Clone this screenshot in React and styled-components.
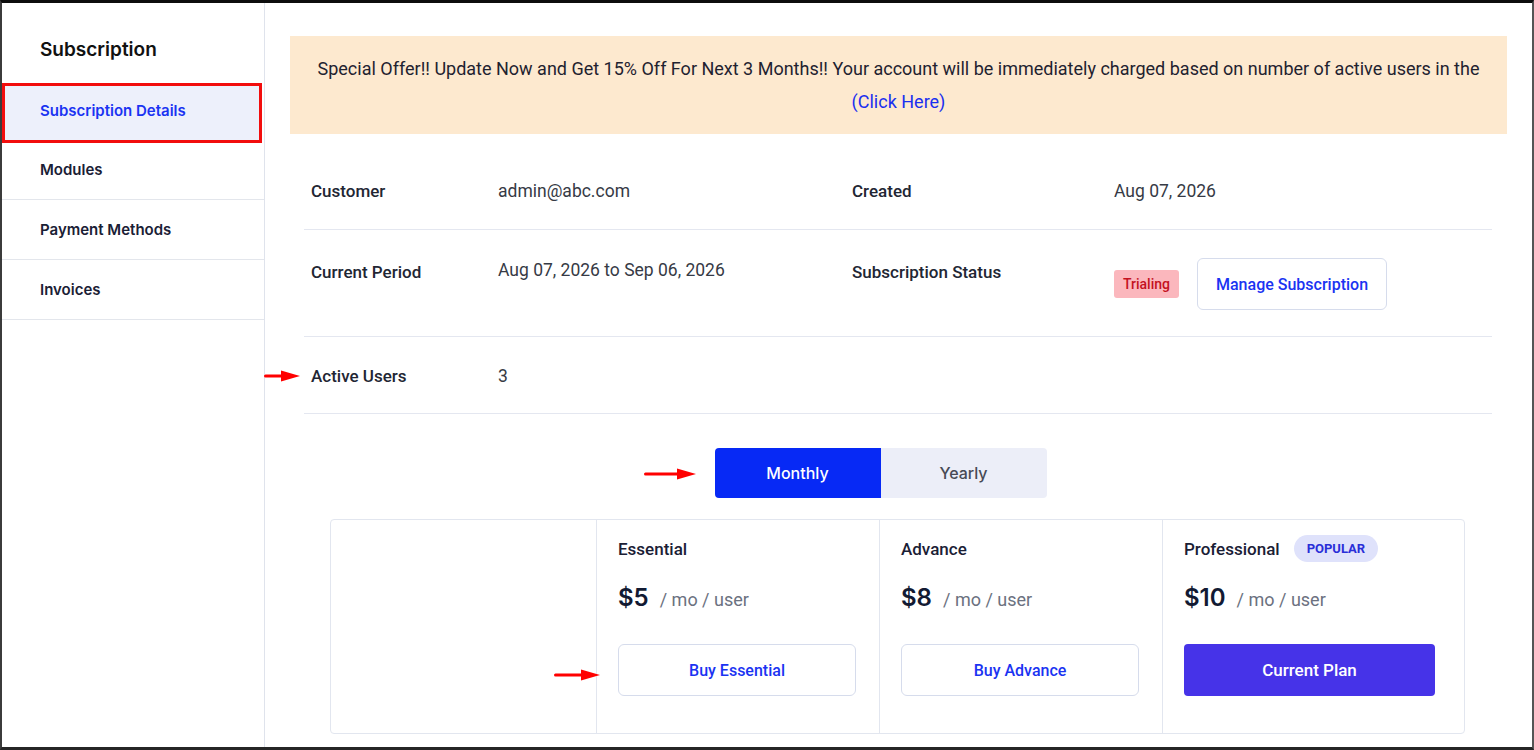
import React, { useState } from "react";
import styled, { createGlobalStyle } from "styled-components";

const GlobalStyle = createGlobalStyle`
  * { box-sizing: border-box; }
  html, body { margin: 0; padding: 0; background: #fff; }
  body { font-family: Roboto, "Liberation Sans", Arial, sans-serif; }
`;

const Frame = styled.div`
  width: 1534px;
  height: 750px;
  display: flex;
  border-top: 3px solid #0d0d0d;
  border-left: 2px solid #3b3b3b;
  border-right: 2px solid #555;
  border-bottom: 3px solid #262626;
  background: #fff;
  overflow: hidden;
`;

const Sidebar = styled.aside`
  width: 263px;
  flex-shrink: 0;
  border-right: 1px solid #dfe3ec;
  padding-top: 35px;
  font-family: Inter, Roboto, sans-serif;
`;

const SideTitle = styled.div`
  font-size: 19px;
  font-weight: 600;
  color: #111;
  line-height: 24px;
  padding-left: 38px;
  margin-bottom: 21px;
`;

const SideItem = styled.div`
  height: 60px;
  display: flex;
  align-items: center;
  padding-left: 38px;
  font-size: 15px;
  font-weight: 600;
  color: #1a2035;
  border-bottom: 1px solid #e3e6ec;
`;

// the selected entry carries a red frame that sits over the next row's top edge
const ActiveItem = styled(SideItem)`
  position: relative;
  z-index: 1;
  padding-left: 35px;
  padding-bottom: 5px;
  margin: 0 2px -3px 0;
  color: #1a33f2;
  background: #edf0fb;
  border: 3px solid #f20d0d;
`;

const Main = styled.main`
  flex: 1;
  padding: 33px 25px 0 25px;
  display: flex;
  flex-direction: column;
`;

const Banner = styled.div`
  background: #fde9cf;
  padding: 16px 20px;
  text-align: center;
  font-size: 18px;
  line-height: 33px;
  color: #1f2230;
`;

const BannerLink = styled.a`
  display: block;
  color: #1a2ff0;
  text-decoration: none;
`;

const InfoTable = styled.div`
  margin: 15px 15px 0 14px;
`;

const InfoRow = styled.div`
  display: grid;
  grid-template-columns: 187px 354px 262px 1fr;
  padding: ${(p) => p.$pad || "28px 7px 26px"};
  border-bottom: 1px solid #e4e7f0;
  align-items: start;
  position: relative;
`;

const Label = styled.div`
  font-size: 17px;
  font-weight: 500;
  color: #222633;
  line-height: 24px;
  margin-top: ${(p) => p.$offset || "0"};
`;

const Value = styled.div`
  font-size: 17.5px;
  color: #363a45;
  line-height: 24px;
  display: flex;
  align-items: center;
  gap: 18px;
`;

const Badge = styled.span`
  background: #fbb7bd;
  color: #c4121f;
  font-size: 14px;
  font-weight: 500;
  height: 28px;
  padding: 0 9px;
  border-radius: 3px;
  display: inline-flex;
  align-items: center;
`;

const OutlineButton = styled.button`
  height: 52px;
  padding: 0 18px;
  background: #fff;
  border: 1px solid #d6dcec;
  border-radius: 6px;
  color: #1a33f2;
  font-family: Roboto, sans-serif;
  font-size: 16px;
  font-weight: 500;
  cursor: pointer;
`;

const ToggleWrap = styled.div`
  display: flex;
  justify-content: center;
  margin-top: 34px;
  padding-right: 36px;
`;

const Toggle = styled.div`
  display: flex;
  position: relative;
`;

const ToggleOption = styled.button`
  width: 166px;
  height: 50px;
  border: none;
  font-family: Inter, Roboto, sans-serif;
  font-size: 16px;
  font-weight: 500;
  cursor: pointer;
  background: ${(p) => (p.$active ? "#0729f5" : "#eceef8")};
  color: ${(p) => (p.$active ? "#fff" : "#474a55")};
  border-radius: ${(p) => (p.$first ? "4px 0 0 4px" : "0 4px 4px 0")};
`;

const PlanGrid = styled.div`
  margin: 21px 42px 0 40px;
  display: grid;
  grid-template-columns: 265px 283px 283px 1fr;
  border: 1px solid #e2e6ef;
  border-radius: 4px;
  height: 215px;
`;

const PlanCell = styled.div`
  position: relative;
  padding: 15px 23px 0 21px;
  border-left: ${(p) => (p.$first ? "none" : "1px solid #e2e6ef")};
  padding-right: ${(p) => (p.$wide ? "29px" : "23px")};
`;

const PlanHead = styled.div`
  display: flex;
  align-items: center;
  gap: 14px;
  height: 27px;
`;

const PlanName = styled.div`
  font-size: 17px;
  font-weight: 500;
  color: #1a2035;
`;

const Popular = styled.span`
  background: #dfe2fb;
  color: #2a2fd8;
  font-size: 13px;
  font-weight: 700;
  height: 27px;
  padding: 0 13px;
  border-radius: 14px;
  display: inline-flex;
  align-items: center;
`;

const PriceRow = styled.div`
  display: flex;
  align-items: baseline;
  gap: 11px;
  margin-top: 21px;
  height: 32px;
`;

const Price = styled.span`
  font-family: Inter, Roboto, sans-serif;
  font-size: 24px;
  font-weight: 600;
  color: #121a33;
`;

const Per = styled.span`
  font-size: 18px;
  color: #6b7180;
`;

const PlanButton = styled(OutlineButton)`
  width: 100%;
  margin-top: 29px;
`;

const CurrentButton = styled.button`
  width: 100%;
  height: 52px;
  margin-top: 29px;
  border: none;
  border-radius: 4px;
  background: #4633e8;
  color: #fff;
  font-family: Roboto, sans-serif;
  font-size: 17px;
  font-weight: 500;
`;

// red pointer arrows laid over the page
const Pointer = styled.svg`
  position: absolute;
  top: ${(p) => p.$top};
  left: ${(p) => p.$left};
  pointer-events: none;
`;

function Arrow({ width, top, left }) {
  return (
    <Pointer $top={top} $left={left} width={width} height="14" viewBox={`0 0 ${width} 14`}>
      <line x1="1.5" y1="7" x2={width - 14} y2="7" stroke="#f00" strokeWidth="3" strokeLinecap="round" />
      <polygon points={`${width - 19},1.5 ${width},7 ${width - 19},12.5`} fill="#f00" />
    </Pointer>
  );
}

const plans = [
  { name: "Essential", price: "$5" },
  { name: "Advance", price: "$8" },
  { name: "Professional", price: "$10", popular: true, current: true },
];

export default function App() {
  const [period, setPeriod] = useState("monthly");

  return (
    <>
      <GlobalStyle />
      <Frame>
        <Sidebar>
          <SideTitle>Subscription</SideTitle>
          <ActiveItem>Subscription Details</ActiveItem>
          <SideItem>Modules</SideItem>
          <SideItem>Payment Methods</SideItem>
          <SideItem>Invoices</SideItem>
        </Sidebar>

        <Main>
          <Banner>
            Special Offer!! Update Now and Get 15% Off For Next 3 Months!! Your account will be
            immediately charged based on number of active users in the
            <BannerLink href="#">(Click Here)</BannerLink>
          </Banner>

          <InfoTable>
            <InfoRow $pad="30px 7px 26px">
              <Label>Customer</Label>
              <Value>admin@abc.com</Value>
              <Label>Created</Label>
              <Value>Aug 07, 2026</Value>
            </InfoRow>
            <InfoRow>
              <Label $offset="2px">Current Period</Label>
              <Value>Aug 07, 2026 to Sep 06, 2026</Value>
              <Label $offset="2px">Subscription Status</Label>
              <Value>
                <Badge>Trialing</Badge>
                <OutlineButton>Manage Subscription</OutlineButton>
              </Value>
            </InfoRow>
            <InfoRow $pad="27px 7px 25px">
              <Arrow width={36} top="32px" left="-40px" />
              <Label>Active Users</Label>
              <Value>3</Value>
            </InfoRow>
          </InfoTable>

          <ToggleWrap>
            <Toggle>
              <Arrow width={52} top="19px" left="-71px" />
              <ToggleOption $first $active={period === "monthly"} onClick={() => setPeriod("monthly")}>
                Monthly
              </ToggleOption>
              <ToggleOption $active={period === "yearly"} onClick={() => setPeriod("yearly")}>
                Yearly
              </ToggleOption>
            </Toggle>
          </ToggleWrap>

          <PlanGrid>
            <PlanCell $first />
            {plans.map((plan, i) => (
              <PlanCell key={plan.name} $wide={i === 2}>
                {i === 0 && <Arrow width={46} top="148px" left="-43px" />}
                <PlanHead>
                  <PlanName>{plan.name}</PlanName>
                  {plan.popular && <Popular>POPULAR</Popular>}
                </PlanHead>
                <PriceRow>
                  <Price>{plan.price}</Price>
                  <Per>/ mo / user</Per>
                </PriceRow>
                {plan.current ? (
                  <CurrentButton>Current Plan</CurrentButton>
                ) : (
                  <PlanButton>Buy {plan.name}</PlanButton>
                )}
              </PlanCell>
            ))}
          </PlanGrid>
        </Main>
      </Frame>
    </>
  );
}
